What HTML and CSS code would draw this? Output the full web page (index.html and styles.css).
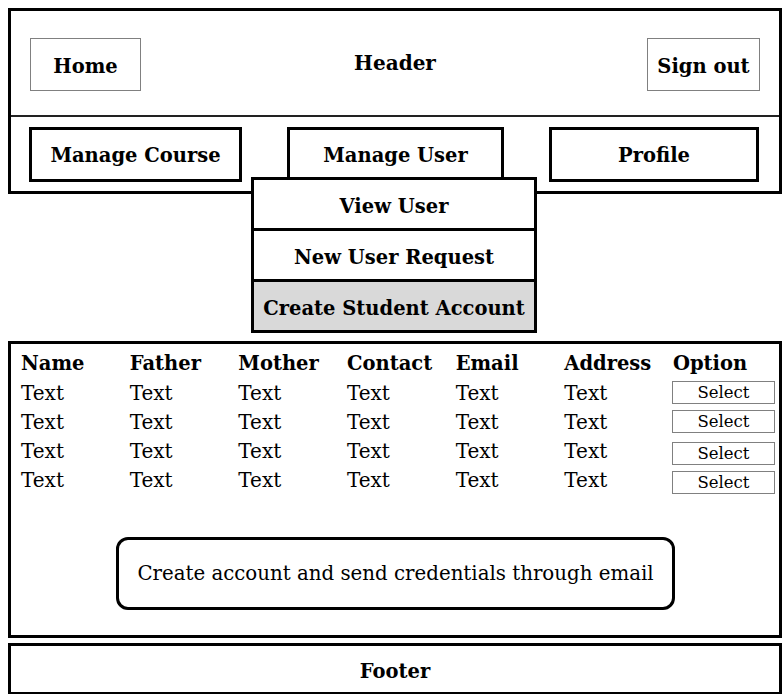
FILE: index.html
```html
<!DOCTYPE html>
<html lang="en">

<head>
    <meta charset="UTF-8">
    <meta name="viewport" content="width=device-width, initial-scale=1.0">
    <title>Admin - Manage User</title>
    <link rel="stylesheet" href="styles.css">
</head>

<body>

    <div class="top-frame">
        <header class="topbar">
            <button class="plain-btn">Home</button>
            <h1>Header</h1>
            <button class="plain-btn signout">Sign out</button>
        </header>

        <nav class="menu">
            <div class="menu-item course">Manage Course</div>
            <div class="menu-item user">
                Manage User
                <!-- dropdown opened over the menu -->
                <ul class="dropdown">
                    <li>View User</li>
                    <li>New User Request</li>
                    <li class="active">Create Student Account</li>
                </ul>
            </div>
            <div class="menu-item profile">Profile</div>
        </nav>
    </div>

    <section class="content">
        <div class="user-table">
            <div class="th">Name</div>
            <div class="th">Father</div>
            <div class="th">Mother</div>
            <div class="th">Contact</div>
            <div class="th">Email</div>
            <div class="th">Address</div>
            <div class="th">Option</div>

            <div>Text</div><div>Text</div><div>Text</div><div>Text</div><div>Text</div><div>Text</div>
            <div><button class="select-btn">Select</button></div>

            <div>Text</div><div>Text</div><div>Text</div><div>Text</div><div>Text</div><div>Text</div>
            <div><button class="select-btn">Select</button></div>

            <div>Text</div><div>Text</div><div>Text</div><div>Text</div><div>Text</div><div>Text</div>
            <div><button class="select-btn low">Select</button></div>

            <div>Text</div><div>Text</div><div>Text</div><div>Text</div><div>Text</div><div>Text</div>
            <div><button class="select-btn low">Select</button></div>
        </div>

        <div class="send-box">Create account and send credentials through email</div>
    </section>

    <footer>Footer</footer>

</body>

</html>
```

FILE: styles.css
```css
body {
    font-family: "DejaVu Serif", "Liberation Serif", serif;
    margin: 8px 0 0 8px;
    padding: 0;
    color: #000;
    background-color: #fff;
}

button {
    font-family: "DejaVu Serif", "Liberation Serif", serif;
    color: #000;
    background-color: #fff;
    cursor: pointer;
}

.top-frame {
    width: 774px;
    box-sizing: border-box;
    border: 3px solid #000;
}

/* Header bar */
.topbar {
    display: grid;
    grid-template-columns: 1fr auto 1fr;
    align-items: center;
    height: 106px;
    padding: 0 19px;
    box-sizing: border-box;
    border-bottom: 2px solid #222;
}

.topbar h1 {
    margin: 0 0 1px 0;
    font-size: 20px;
    font-weight: bold;
}

.plain-btn {
    justify-self: start;
    width: 111px;
    height: 53px;
    border: 1px solid #808080;
    font-size: 19.5px;
    font-weight: bold;
    padding: 5px 0 0 0;
    margin-top: 2px;
}

.plain-btn.signout {
    justify-self: end;
    width: 113px;
}

/* Menu row */
.menu {
    display: flex;
    justify-content: space-between;
    padding: 10px 20px 9px 18px;
}

.menu-item {
    position: relative;
    height: 55px;
    box-sizing: border-box;
    border: 3px solid #000;
    padding-top: 2px;
    display: flex;
    align-items: center;
    justify-content: center;
    font-size: 19.5px;
    font-weight: bold;
}

.menu-item.course {
    width: 213px;
}

.menu-item.user {
    width: 217px;
}

.menu-item.profile {
    width: 210px;
}

.dropdown {
    position: absolute;
    left: -39px;
    top: 47px;
    width: 286px;
    margin: 0;
    padding: 0;
    list-style: none;
    box-sizing: border-box;
    border: 3px solid #000;
    background-color: #fff;
    z-index: 2;
}

.dropdown li {
    height: 48px;
    box-sizing: border-box;
    padding-top: 4px;
    display: flex;
    align-items: center;
    justify-content: center;
    font-size: 19.5px;
    font-weight: bold;
}

.dropdown li + li {
    border-top: 3px solid #000;
    height: 51px;
}

.dropdown li.active {
    background-color: #d9d9d9;
}

/* Main area */
.content {
    width: 774px;
    height: 297px;
    margin-top: 147px;
    box-sizing: border-box;
    border: 3px solid #000;
    padding: 5px 0 0 10px;
}

.user-table {
    display: grid;
    grid-template-columns: repeat(6, 108.67px) 1fr;
    grid-auto-rows: 29px;
    align-items: center;
    font-size: 20px;
}

.user-table .th {
    font-weight: bold;
    font-size: 19.5px;
}

.select-btn {
    display: block;
    width: 103px;
    height: 23px;
    margin-left: -1px;
    padding: 0;
    border: 1px solid #808080;
    font-size: 16.5px;
    font-weight: normal;
}

.select-btn.low {
    margin-top: 6px;
}

.send-box {
    width: 559px;
    height: 73px;
    margin: 43px 0 0 95px;
    box-sizing: border-box;
    border: 3px solid #000;
    border-radius: 12px;
    display: flex;
    align-items: center;
    justify-content: center;
    font-size: 19.8px;
}

footer {
    width: 774px;
    height: 52px;
    margin-top: 5px;
    box-sizing: border-box;
    border: 3px solid #000;
    padding-top: 4px;
    display: flex;
    align-items: center;
    justify-content: center;
    font-size: 19.5px;
    font-weight: bold;
}
```
